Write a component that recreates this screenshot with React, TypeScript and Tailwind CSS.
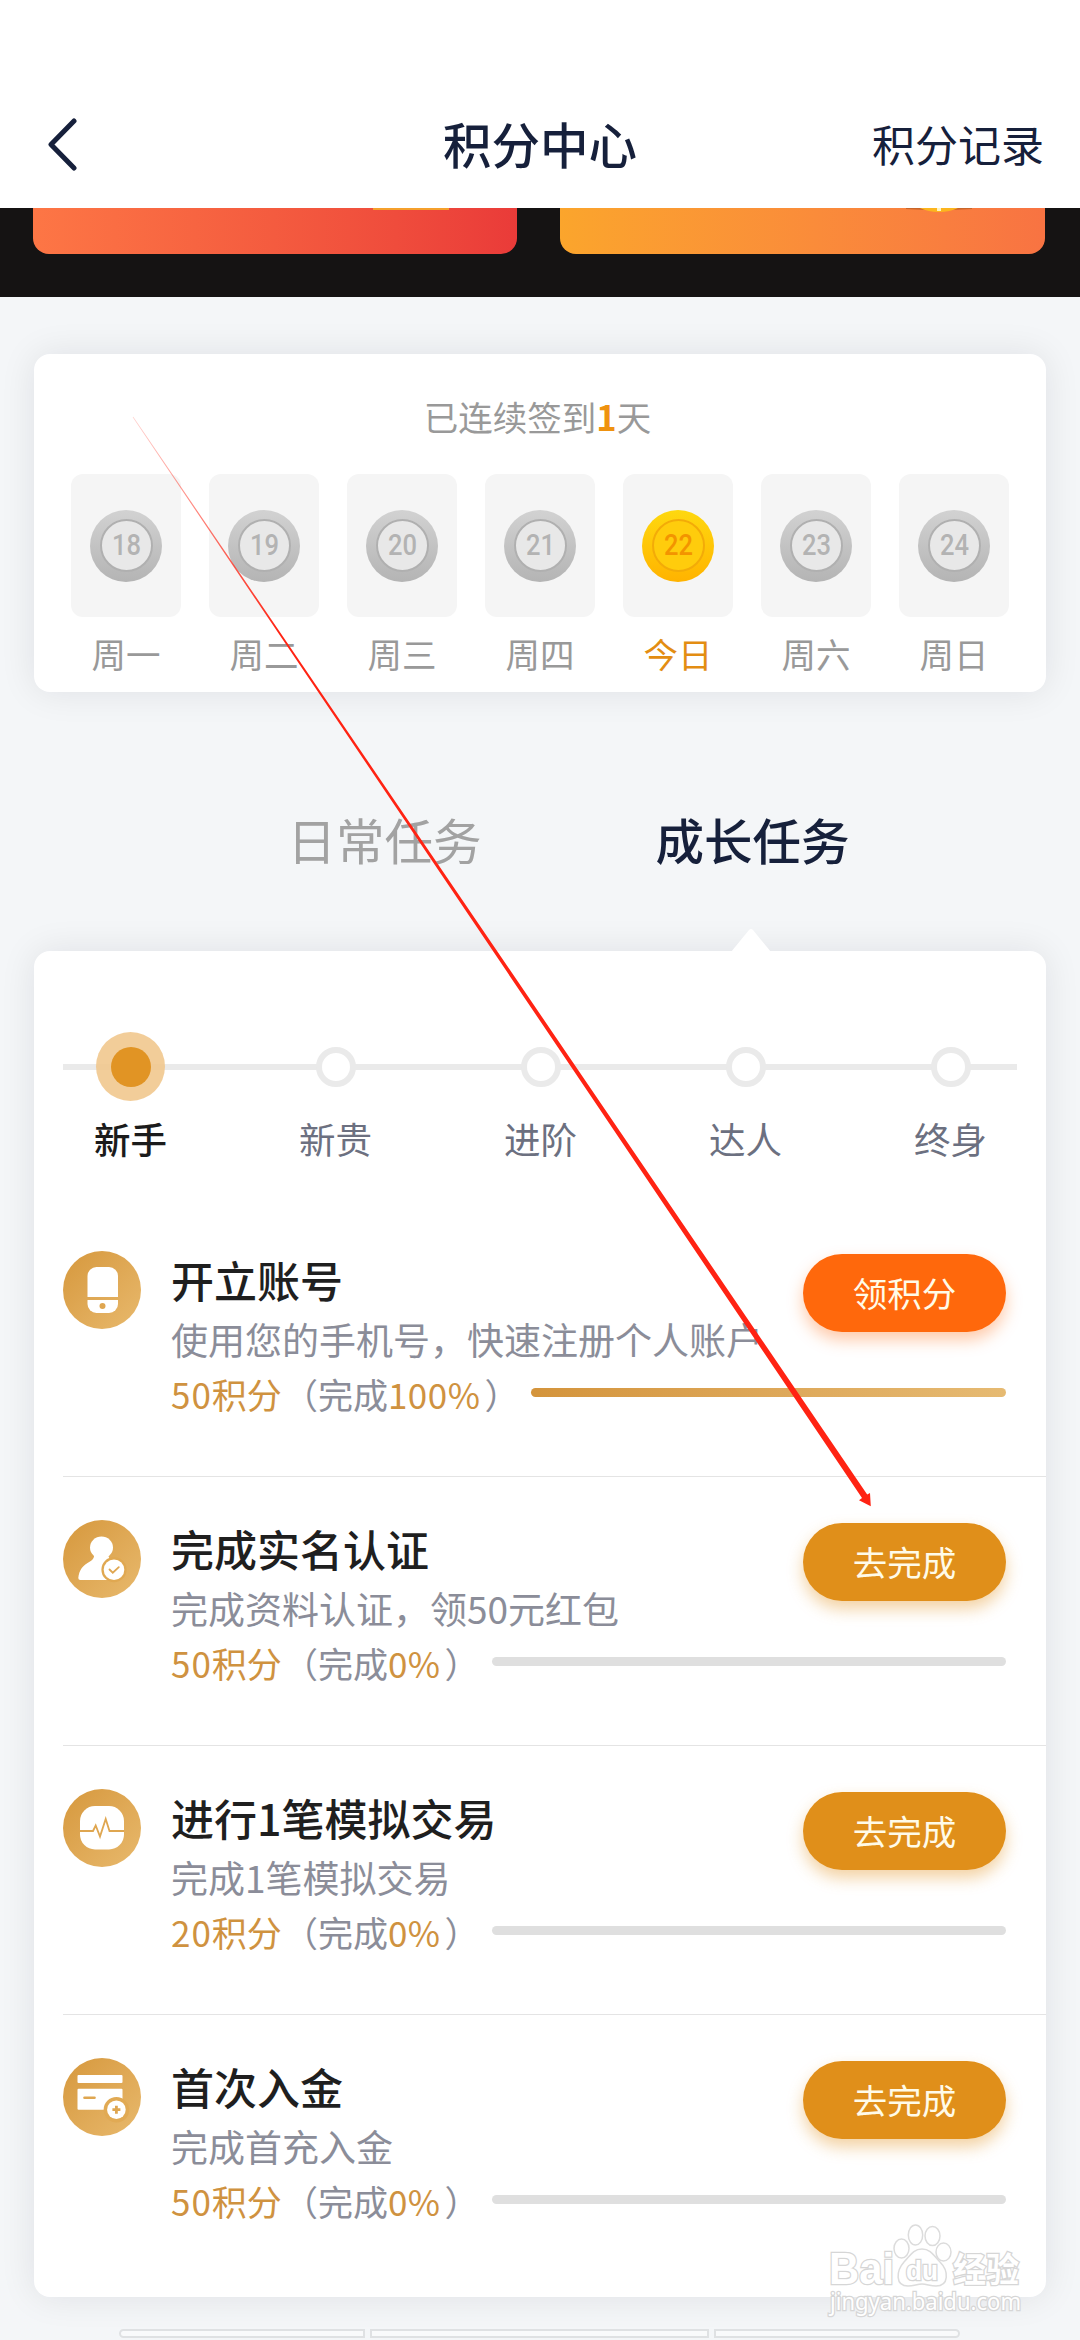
import type { ReactNode } from "react";

const days = [
  { n: 18, label: "周一" },
  { n: 19, label: "周二" },
  { n: 20, label: "周三" },
  { n: 21, label: "周四" },
  { n: 22, label: "今日", today: true },
  { n: 23, label: "周六" },
  { n: 24, label: "周日" },
];

const steps = ["新手", "新贵", "进阶", "达人", "终身"];

function Coin({ n, today }: { n: number; today?: boolean }) {
  return (
    <div
      className={`flex size-[72px] items-center justify-center rounded-full bg-linear-to-b ${
        today ? "from-[#fed80f] to-[#ffb300]" : "from-[#d2d2d2] to-[#b4b4b4]"
      }`}
    >
      <div
        className={`flex size-[53px] items-center justify-center rounded-full border-2 ${
          today ? "border-[#f3ab08] bg-[#ffcc0c]" : "border-[#b0b0b0] bg-[#e8e8e8]"
        }`}
      >
        <span
          className={`scale-x-[0.88] font-[Roboto] text-[29px] leading-none font-medium ${
            today ? "text-[#f39400]" : "text-[#b3b3b3]"
          }`}
        >
          {n}
        </span>
      </div>
    </div>
  );
}

function PhoneIcon() {
  return (
    <>
      <path d="M24.5 46V25a9 9 0 0 1 9-9h12.500a9 9 0 0 1 9 9v21z" fill="#fff" />
      <path d="M24.500 49h30.500v4a9 9 0 0 1-9 9h-12.500a9 9 0 0 1-9-9z" fill="#fff" />
      <circle cx="39.500" cy="55" r="3" fill="#dfa650" />
    </>
  );
}

function PersonIcon() {
  return (
    <>
      <ellipse cx="38.500" cy="27.500" rx="11.500" ry="11" fill="#fff" />
      <path d="M31 33q1 6-4 8.500C20 45 16 50 15.300 58q0 2 2 2H50V41q-5-2-5-8z" fill="#fff" />
      <circle cx="51" cy="49.700" r="12.600" fill="#e0a851" />
      <circle cx="51" cy="49.700" r="10.300" fill="#fff" />
      <path d="M46.500 49.500l3.300 3.200 6-5.500" fill="none" stroke="#dfa650" strokeWidth="1.800" strokeLinecap="round" />
    </>
  );
}

function PulseIcon() {
  return (
    <>
      <rect x="17" y="17" width="44" height="43.500" rx="15" fill="#fff" />
      <path d="M17 42h13l2.700-5.500L37 47.500 42.700 30l3.800 12H61" fill="none" stroke="#dfa650" strokeWidth="1.800" />
    </>
  );
}

function CardIcon() {
  return (
    <>
      <rect x="14.500" y="17" width="45" height="8" rx="1" fill="#fff" />
      <rect x="14.500" y="30.700" width="45" height="21" rx="1" fill="#fff" />
      <path d="M21.500 39.700h10" stroke="#dfa650" strokeWidth="2.600" strokeLinecap="round" />
      <circle cx="53.400" cy="51.700" r="12.800" fill="#e1aa54" />
      <circle cx="53.400" cy="51.700" r="9.300" fill="#fff" />
      <path d="M49.400 51.700h8M53.400 47.700v8" stroke="#dfa650" strokeWidth="2.800" />
    </>
  );
}

const tasks: {
  title: string;
  desc: string;
  points: number;
  percent: number;
  action: string;
  icon: ReactNode;
}[] = [
  { title: "开立账号", desc: "使用您的手机号，快速注册个人账户", points: 50, percent: 100, action: "领积分", icon: <PhoneIcon /> },
  { title: "完成实名认证", desc: "完成资料认证，领50元红包", points: 50, percent: 0, action: "去完成", icon: <PersonIcon /> },
  { title: "进行1笔模拟交易", desc: "完成1笔模拟交易", points: 20, percent: 0, action: "去完成", icon: <PulseIcon /> },
  { title: "首次入金", desc: "完成首充入金", points: 50, percent: 0, action: "去完成", icon: <CardIcon /> },
];

function TaskRow({ task, last }: { task: (typeof tasks)[number]; last: boolean }) {
  const done = task.percent === 100;
  return (
    <div className={`ml-[29px] flex h-[269px] pt-[43px] pr-10 ${last ? "" : "border-b border-[#e4e4e4]"}`}>
      <svg viewBox="0 0 78 78" className="size-[78px] shrink-0 rounded-full bg-linear-to-br from-[#d6983c] to-[#e8b96c]">
        {task.icon}
      </svg>
      <div className="ml-[30px] min-w-0 flex-1">
        <div className="flex h-[119px] justify-between">
          <div className="-mt-[2px] whitespace-nowrap">
            <div className="h-[60px] text-[43px] leading-[60px] font-medium text-[#1f1f1f]">{task.title}</div>
            <div className="h-[60px] w-[600px] text-[37px] leading-[60px] text-[#8b8d99]">{task.desc}</div>
          </div>
          <button
            className={`mt-[3px] h-[78px] w-[203px] shrink-0 rounded-full pb-[2px] text-[34.5px] leading-[76px] text-[#fffbe8] ${
              done
                ? "bg-[#ff680c] shadow-[0_8px_16px_rgba(255,104,12,0.35)]"
                : "bg-[#e08f1a] shadow-[0_8px_16px_rgba(224,143,26,0.4)]"
            }`}
          >
            {task.action}
          </button>
        </div>
        <div className="flex h-12 items-center text-[35px] leading-[48px] whitespace-nowrap text-[#8b8d99]">
          <span className="text-[#cf9240]">
            <span className="tracking-[1px]">{task.points}</span>积分
          </span>
          <span className="ml-px">（完成</span>
          <span className="tracking-[0.5px] text-[#cf9240]">{task.percent}%</span>
          <span className="ml-1">）</span>
          <div
            className={`mb-1 ml-auto h-[9px] rounded-full ${
              done ? "w-[475px] bg-linear-to-r from-[#d4943b] to-[#e6ba72]" : "w-[514px] bg-[#dfdfdf]"
            }`}
          />
        </div>
      </div>
    </div>
  );
}

function Watermark() {
  return (
    <svg viewBox="0 0 210 110" className="absolute top-[2215px] left-[822px] h-[110px] w-[210px]">
      <g fill="#fff" stroke="#dcdcdc" strokeWidth="1.500">
        <ellipse cx="79.500" cy="33.500" rx="7.500" ry="9.500" />
        <ellipse cx="93.500" cy="20" rx="7.200" ry="10" />
        <ellipse cx="110.500" cy="21" rx="7.500" ry="9.500" />
        <ellipse cx="121.500" cy="37" rx="7.500" ry="9" />
        <path d="M100 34c9 0 12 7 18 13 9 9 9 24-4 24-6 0-9-2-14-2s-8 2-14 2c-13 0-12-15-4-24 6-6 9-13 18-13z" />
      </g>
      <g fill="#fff" stroke="#d6d6d6" strokeWidth="2.600" paintOrder="stroke" className="font-bold">
        <text x="7" y="69" fontSize="45" textLength="65" lengthAdjust="spacingAndGlyphs" fontFamily="Liberation Sans, sans-serif">Bai</text>
        <text x="84" y="65" fontSize="27" textLength="32" lengthAdjust="spacingAndGlyphs" fontFamily="Liberation Sans, sans-serif">du</text>
        <text x="131" y="67" fontSize="34" textLength="66" lengthAdjust="spacingAndGlyphs" fontFamily="Noto Sans CJK SC, sans-serif">经验</text>
      </g>
      <text x="8" y="95" fontSize="23" textLength="191" lengthAdjust="spacingAndGlyphs" fill="#fff" stroke="#d6d6d6" strokeWidth="2.600" paintOrder="stroke" fontFamily="Noto Sans, sans-serif">
        jingyan.baidu.com
      </text>
    </svg>
  );
}

export default function App() {
  return (
    <div className="relative flex h-[2340px] w-[1080px] flex-col overflow-hidden bg-[#f4f6f8] font-['Noto_Sans_CJK_SC',sans-serif]">
      <header className="relative z-10 grid h-[208px] shrink-0 grid-cols-[1fr_auto_1fr] items-center bg-white pt-[78px] pr-[36px] pl-[46px]">
        <svg viewBox="0 0 32 54" className="mt-[3px] h-[54px] w-8" fill="none" stroke="#16203b" strokeWidth="5" strokeLinecap="round" strokeLinejoin="round">
          <path d="M28 3L5 26.500 28 50" />
        </svg>
        <h1 className="-ml-[10px] text-[48.500px] leading-[70px] font-medium text-[#16203b]">积分中心</h1>
        <span className="justify-self-end text-[43px] leading-[70px] text-[#16203b]">积分记录</span>
      </header>

      <div className="flex h-[89px] shrink-0 justify-between bg-[#151313] pr-[35px] pl-[33px]">
        <div className="flex h-[46px] w-[484px] items-start justify-end rounded-b-2xl bg-linear-to-r from-[#fd7645] to-[#ea3b39] pr-[68px]">
          <div className="h-[2px] w-[76px] bg-[#f5a02c]" />
        </div>
        <div className="flex h-[46px] w-[485px] items-start justify-end rounded-b-2xl bg-linear-to-r from-[#fba52c] to-[#f87342] pr-[73px]">
          <svg viewBox="0 0 66 4" className="h-1 w-[66px]">
            <path d="M0 0h66v1L45 2H20L0 1z" fill="#c9662a" />
            <path d="M14 0h38q-8 4-19 4T14 0z" fill="#fcb51e" />
            <path d="M31 0h4v3h-4z" fill="#fff3c0" />
          </svg>
        </div>
      </div>

      <section className="mx-[34px] mt-[57px] h-[338px] shrink-0 rounded-2xl bg-white px-[37px] shadow-[0_0_36px_rgba(20,20,30,0.09)]">
        <p className="mt-[38px] h-12 pr-[5px] text-center text-[34.500px] leading-[48px] text-[#999]">
          已连续签到<b className="font-bold text-[#ef920f]">1</b>天
        </p>
        <div className="mt-[34px] flex justify-between">
          {days.map((d) => (
            <div key={d.n} className="flex w-[110px] flex-col items-center">
              <div className="flex h-[143px] w-full items-center justify-center rounded-xl bg-[#f5f5f5]">
                <Coin n={d.n} today={d.today} />
              </div>
              <span className={`mt-[12px] text-[34.500px] leading-[48px] ${d.today ? "text-[#e38d12]" : "text-[#999]"}`}>
                {d.label}
              </span>
            </div>
          ))}
        </div>
      </section>

      <nav className="mt-[112px] flex h-[73px] shrink-0 justify-center gap-[174px] pl-[57px] text-[48.500px] leading-[70px]">
        <span className="text-[#a2a2a2]">日常任务</span>
        <span className="font-medium text-[#16203b]">成长任务</span>
      </nav>

      <section className="relative mx-[34px] mt-[74px] h-[1346px] shrink-0 rounded-2xl bg-white shadow-[0_0_36px_rgba(20,20,30,0.09)]">
        <svg viewBox="0 0 40 24" className="absolute -top-[23px] left-[697px] h-6 w-10">
          <path d="M0 24L18 2q2-2 4 0l18 22z" fill="#fff" />
        </svg>
        <div className="mx-[29px] mt-[113px] h-[6px] bg-[#eaeaea]" />
        <div className="-mt-[38px] ml-[29px] flex h-[176px]">
          <div className="-ml-[35px] flex">
            {steps.map((s, i) => (
              <div key={s} className="relative flex w-[205px] flex-col items-center">
                <div className="flex h-[69px] items-center">
                  {i === 0 ? (
                    <div className="flex size-[69px] items-center justify-center rounded-full bg-[#f1c88e]/90">
                      <div className="size-10 rounded-full bg-[#e19424]" />
                    </div>
                  ) : (
                    <div className="size-10 rounded-full border-[6px] border-[#eaeaea] bg-white" />
                  )}
                </div>
                <span className={`mt-[12px] text-[36.500px] leading-[52px] ${i === 0 ? "font-medium text-[#1b1b1b]" : "text-[#6c7080]"}`}>
                  {s}
                </span>
              </div>
            ))}
          </div>
        </div>
        {tasks.map((t, i) => (
          <TaskRow key={t.title} task={t} last={i === tasks.length - 1} />
        ))}
      </section>

      <div className="mt-[32px] ml-[119px] flex h-[9px] w-[841px] shrink-0 gap-[5px]">
        <div className="w-[246px] rounded-l-md border-2 border-[#dfe1e3] bg-[#f9fafb]" />
        <div className="flex-1 border-2 border-[#dfe1e3] bg-[#f9fafb]" />
        <div className="w-[246px] rounded-r-md border-2 border-[#dfe1e3] bg-[#f9fafb]" />
      </div>

      <Watermark />

      <svg viewBox="0 0 1080 2340" className="pointer-events-none absolute inset-0 z-20 h-full w-full">
        <defs>
          <linearGradient id="arrow" gradientUnits="userSpaceOnUse" x1="133" y1="417" x2="280" y2="634">
            <stop offset="0" stopColor="#ff2313" stopOpacity="0.2" />
            <stop offset="1" stopColor="#ff2313" />
          </linearGradient>
        </defs>
        <path d="M132.700 417.200L862 1498 859 1500.200 870.800 1506.200 870 1493 867.200 1494.500 133.300 416.800z" fill="url(#arrow)" />
      </svg>
    </div>
  );
}
